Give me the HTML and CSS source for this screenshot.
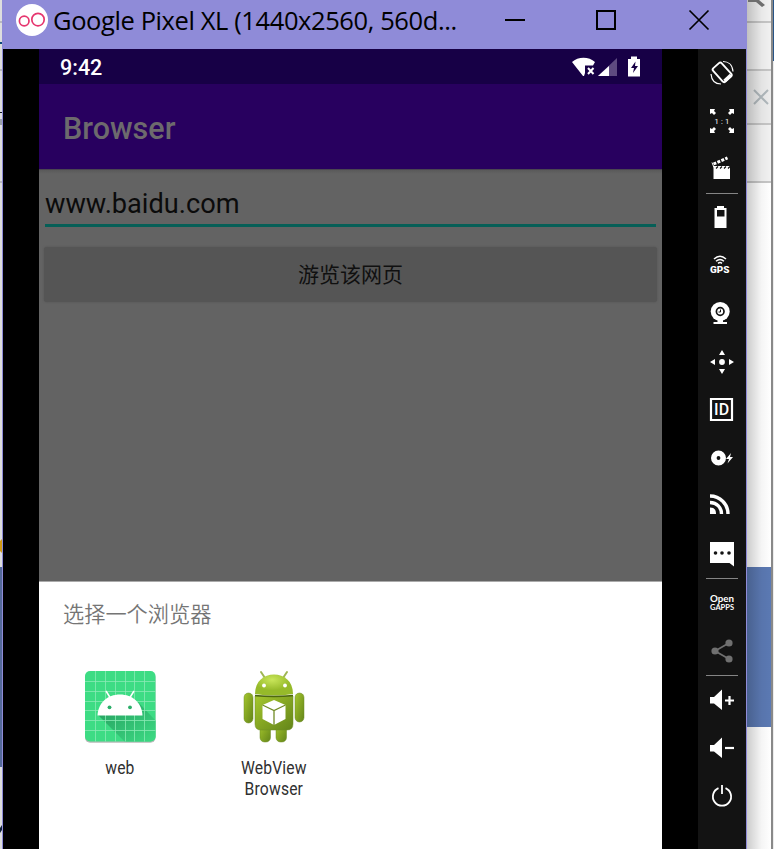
FILE: index.html
```html
<!DOCTYPE html>
<html lang="zh-CN">
<head>
<meta charset="utf-8">
<title>Google Pixel XL</title>
<link rel="stylesheet" href="styles.css">
</head>
<body>
<div class="desktop">
  <div class="behind-left">
    <svg width="2" height="849">
      <path d="M0 21h2v2H0zM0 69h2v2H0zM0 181h2v2H0z" fill="#b8b8be"/>
      <path d="M0 42h2v2H0z" fill="#0b4a78"/><path d="M0 112h2v1H0z" fill="#0b1620"/>
      <path d="M0 119h2v6H0z" fill="#9aa0aa"/>
      <path d="M0 541l2-2v14l-2-2z" fill="#d29a12"/>
      <path d="M0 567h2v200H0z" fill="#54699a"/>
      <path d="M0 828l2-3v5l-2 3z" fill="#10203a"/>
    </svg>
  </div>
  <main class="window">
    <header class="titlebar">
      <svg class="logo" width="32" height="32" viewBox="0 0 32 32"><circle cx="16" cy="16" r="16" fill="#fff"/><g fill="none" stroke="#e6366f" stroke-width="1.700"><circle cx="8.200" cy="17" r="4.800"/><circle cx="22" cy="15.600" r="6.200"/></g></svg>
      <h1>Google Pixel XL (1440x2560, 560d...</h1>
      <svg class="controls" width="206" height="24" viewBox="0 0 206 24" fill="none" stroke="#000" stroke-width="2"><path d="M0 12h20"/><path d="M92 3h18v18H92z"/><path d="M184.500 2.500l19 19M203.500 2.500l-19 19" stroke-width="1.700"/></svg>
    </header>
    <div class="emulator">
      <section class="screen">
        <div class="status"><span>9:42</span>
          <svg width="70" height="24" viewBox="0 0 70 24"><path d="M0 6C6 .2 17 .2 23 6l-2 3.500h-8V17l-1 3h-1z" fill="#fff"/><path d="M16 12l5.500 6M21.500 12L16 18" stroke="#fff" stroke-width="2"/><path d="M45 2v18H26z" fill="#5e4b80"/><path d="M37 10v10H26z" fill="#fff"/><path d="M59 .5h6V3h3v17.500H56V3h3z" fill="#fff"/><path d="M63.500 5.500L59 12h3l-1 5 5-7h-3z" fill="#170046"/></svg>
        </div>
        <div class="appbar">Browser</div>
        <div class="content">
          <div class="field">www.baidu.com</div>
          <div class="button">游览该网页</div>
        </div>
        <div class="sheet">
          <h2>选择一个浏览器</h2>
          <div class="apps">
            <div class="app">
              <svg width="72" height="74" viewBox="0 0 72 74"><defs><clipPath id="tile"><rect x="1" y="1" width="70.500" height="70.500" rx="5"/></clipPath><linearGradient id="shade" x1="0" y1="0" x2="1" y2="1"><stop offset="0" stop-color="#249b5d"/><stop offset="1" stop-color="#3ddc84"/></linearGradient></defs>
                <rect x="1" y="2.200" width="70.500" height="70.500" rx="5" fill="#b9b9b9"/><rect x="1" y="1" width="70.500" height="70.500" rx="5" fill="#3ddc84"/>
                <g clip-path="url(#tile)"><path d="M14 45L41 72H72V51L54 32z" fill="url(#shade)"/><path d="M11.500 0v72M21.500 0v72M31.500 0v72M41.500 0v72M50.500 0v72M60.500 0v72M0 11.500h72M0 21.500h72M0 31.500h72M0 40.500h72M0 50.500h72M0 60.500h72" stroke="#8aeab5" stroke-width=".8"/></g>
                <path d="M13.500 45.500C14 33 23.500 24.500 36 24.500S58 33 58.500 45.500z" fill="#fff"/><path d="M22 21l5 8M50 21l-5 8" stroke="#fff" stroke-width="1.500"/><circle cx="25.500" cy="37.300" r="1.900" fill="#2bae69"/><circle cx="46" cy="37.300" r="1.900" fill="#2bae69"/></svg>
              <span>web</span>
            </div>
            <div class="app">
              <svg width="72" height="74" viewBox="0 0 72 74"><defs><linearGradient id="body" x1="0" y1="0" x2="1" y2="1"><stop offset="0" stop-color="#a5c72e"/><stop offset=".5" stop-color="#84a522"/><stop offset="1" stop-color="#63851a"/></linearGradient><radialGradient id="head" cx=".45" cy=".25"><stop offset="0" stop-color="#c9e65a"/><stop offset="1" stop-color="#96ba2a"/></radialGradient></defs>
                <path d="M23 2l6 9M49 2l-6 9" stroke="#9fb653" stroke-width="2" stroke-linecap="round"/><g fill="url(#body)" stroke="#6f8c26" stroke-width=".5"><rect x="22" y="53" width="10.500" height="19" rx="4.500"/><rect x="38" y="53" width="10.500" height="19" rx="4.500"/><rect x="6" y="23" width="9" height="30" rx="4.500"/><rect x="57" y="23" width="9" height="29" rx="4.500"/><path d="M17 26h38v28q0 6-6 6H23q-6 0-6-6z"/></g><path d="M17 24C17 11 26 4.500 36 4.500S55 11 55 24q-19 3-38 0z" fill="url(#head)"/><path d="M17 25.500q19 2 38 0" fill="none" stroke="#4d6810" stroke-width="1.500"/><circle cx="26" cy="15.500" r="1.900" fill="#fff"/><circle cx="47" cy="15.500" r="1.900" fill="#fff"/><path d="M36 30l11.500 5v14L36 55l-11.500-6V35z" fill="#fff"/><path d="M24.500 35L36 40.500 47.500 35M36 40.500V55" stroke="#718b25" stroke-width="1.300" fill="none"/></svg>
              <span>WebView<br>Browser</span>
            </div>
          </div>
        </div>
      </section>
      <nav class="tools">
        <svg viewBox="0 0 48 48"><g fill="none" stroke="#fff"><rect x="18.500" y="14.500" width="11.500" height="18" rx="2" transform="rotate(-42 24 23.500)" stroke-width="1.900"/><path d="M26.500 32l6.500-6" stroke-width="3.500"/><path d="M25 12.500c5 0 9.500 3 10 10M13 25c.5 6 4 10 10 10" stroke-width="1.200"/></g></svg>
        <svg viewBox="0 0 48 48"><g fill="#fff"><path d="M12 12h5l-1 2 2 2-2 2-2-2-2 1zM36 12h-5l1 2-2 2 2 2 2-2 2 1zM12 36v-5l2 1 2-2 2 2-2 2 1 2zM36 36v-5l-2 1-2-2-2 2 2 2-1 2z"/><text x="24" y="26.600" font-size="7.500" text-anchor="middle" letter-spacing=".2">1 : 1</text></g></svg>
        <svg viewBox="0 0 48 48"><path d="M15.500 21h16.500v13H15.500z" fill="#fff"/><path d="M18 23.500l2-2M22 23.500l2-2M26 23.500l2-2M30 23.500l2-2" stroke="#131313" stroke-width="1.200"/><path d="M15.500 19L29.500 12.800" stroke="#fff" stroke-width="3" stroke-dasharray="3 1.300"/><path d="M14 17.500l2 5" stroke="#fff"/></svg>
        <hr>
        <svg viewBox="0 0 48 48"><path fill="#fff" fill-rule="evenodd" d="M19 12h7v2h2.500v20h-12V14H19zM19 16v6.500h7.500V16z"/></svg>
        <svg viewBox="0 0 48 48"><g fill="none" stroke="#fff" stroke-width="1.500"><path d="M16 17q6-5.500 12 0M18 19.200q4-3.500 8 0M20 21.300q2-1.500 4 0"/></g><text class="heavy" x="12" y="31" font-size="9" fill="#fff" textLength="19.500" lengthAdjust="spacingAndGlyphs">GPS</text></svg>
        <svg viewBox="0 0 48 48"><circle cx="22.200" cy="21.500" r="9.500" fill="#fff"/><circle cx="22.200" cy="21.500" r="3.800" fill="none" stroke="#131313" stroke-width="1.700"/><path d="M20.500 22h2v-2.500" fill="none" stroke="#131313"/><path d="M19.500 30h5.500v2h4v2H15.500v-2h4z" fill="#fff"/></svg>
        <svg viewBox="0 0 48 48"><path fill="#fff" d="M24 12l3 5h-6zM24 36l-3-5h6zM12 24l5-3v6zM36 24l-5-3v6z"/><circle cx="24" cy="24" r="2.900" fill="#fff"/></svg>
        <svg viewBox="0 0 48 48"><path d="M13 13h21v21H13z" fill="none" stroke="#fff" stroke-width="2.200"/><text class="id" x="23.600" y="29.200" font-size="16" text-anchor="middle" fill="#fff">ID</text></svg>
        <svg viewBox="0 0 48 48"><circle cx="20.500" cy="24" r="4.700" fill="none" stroke="#fff" stroke-width="5.600"/><path fill="#fff" d="M33 19l-5 6h3l-1.500 4.500 5.500-6.500h-3z"/></svg>
        <svg viewBox="0 0 48 48"><g fill="none" stroke="#fff" stroke-width="3.400"><path d="M12 14c10 0 18 8 18 18M12 20.500c7 0 11.500 5 11.500 11.500"/></g><path d="M12 25.500c4 0 6 2 6 6.500h-6z" fill="#fff"/></svg>
        <svg viewBox="0 0 48 48"><path fill="#fff" d="M12 12h24v24.500L31.500 33H12z"/><g fill="#131313"><circle cx="17.500" cy="23" r="1.800"/><circle cx="24" cy="23" r="1.800"/><circle cx="31" cy="23" r="1.800"/></g></svg>
        <hr>
        <svg viewBox="0 0 48 48"><g class="gapps" fill="#fff"><text x="12" y="23" font-size="9.500" textLength="24" lengthAdjust="spacingAndGlyphs">Open</text><text x="12" y="31" font-size="7.500" textLength="24" lengthAdjust="spacingAndGlyphs">GAPPS</text></g></svg>
        <svg viewBox="0 0 48 48"><g fill="#707070"><path d="M31 16L17 24l14 8" fill="none" stroke="#707070" stroke-width="1.700"/><circle cx="31" cy="16" r="3.600"/><circle cx="17" cy="24" r="3.600"/><circle cx="31" cy="32" r="3.600"/></g></svg>
        <hr>
        <svg viewBox="0 0 48 48"><path fill="#fff" d="M12 21h4l8-7.500v20.500l-8-6.500h-4z"/><path d="M27 24.500h9M31.500 20v9" stroke="#fff" stroke-width="2.200"/></svg>
        <svg viewBox="0 0 48 48"><path fill="#fff" d="M12 21h4l8-7.500v20.500l-8-6.500h-4z"/><path d="M27 24h9" stroke="#fff" stroke-width="2.200"/></svg>
        <svg viewBox="0 0 48 48"><g fill="none" stroke="#fff" stroke-width="1.800"><path d="M20.500 16.200a9.100 9.100 0 1 0 7 0M24 13v9"/></g></svg>
      </nav>
    </div>
  </main>
  <aside class="behind-right">
    <div class="pane"><i class="r1"></i><i class="r2"></i><i class="r3"><svg width="18" height="18" viewBox="0 0 18 18"><path d="M2 2l14 14M16 2L2 16" stroke="#b0b8bc" stroke-width="2"/></svg></i><i class="r4"></i><i class="r5"></i><i class="r6"></i><i class="r7"></i></div>
    <div class="edge"></div>
    <svg class="corner" width="24" height="8" viewBox="0 0 24 8"><path d="M1 0h11l6 5-3 2-6-5H1z" fill="#6e6e6e"/></svg>
  </aside>
</div>
</body>
</html>
```
FILE: styles.css
```css
* { box-sizing: border-box; }
body { margin: 0; overflow: hidden; background: #fff; font-family: Roboto, "Noto Sans CJK SC", sans-serif; }
svg { display: block; flex: none; }
h1, h2 { margin: 0; font-weight: 400; }
.desktop { display: flex; width: 774px; height: 849px; }
.behind-left { width: 2px; background: #dedede; }
.window { width: 745px; display: flex; flex-direction: column; background: #8f8bd8; }
.titlebar { height: 49px; display: flex; align-items: center; padding: 0 36px 9px 14px; }
.titlebar h1 { margin-left: 5px; width: 410px; font: 25.5px/38px "Open Sans", "Noto Sans", sans-serif; letter-spacing: -.4px; white-space: nowrap; color: #000; }
.controls { margin-left: auto; }
.emulator { flex: 1; display: flex; margin: 0 1px; background: #000; padding-left: 36px; justify-content: space-between; }
.screen { width: 623px; display: flex; flex-direction: column; background: #636363; }
.status { height: 35px; background: #170046; display: flex; justify-content: space-between; align-items: center; padding: 2px 20px 0 21px; color: #fff; font-size: 21.5px; font-weight: 500; }
.appbar { height: 86px; background: #28005f; color: #6d6a6d; font-size: 30.5px; font-weight: 500; line-height: 89px; padding-left: 24px; border-bottom: 1px solid #4a4551; }
.content { height: 411px; padding: 14px 5px 0; background: linear-gradient(#595959, #636363 4px); }
.field { height: 43px; margin: 0 1px; border-bottom: 3px solid #065f57; font-size: 27.2px; line-height: 41px; color: #0b0b0b; }
.button { height: 55px; margin-top: 20px; border-radius: 3px; background: #555; box-shadow: 0 0 2px #505050; text-align: center; font-size: 21px; line-height: 56px; color: #101010; }
.sheet { flex: 1; background: #fff; border-top: 1px solid #aaa; padding: 17px 4px 0; }
.sheet h2 { padding-left: 20px; font-size: 21.2px; line-height: 32px; font-weight: 350; color: #757575; }
.apps { display: flex; margin-top: 39px; }
.app { width: 154px; display: flex; flex-direction: column; align-items: center; }
.app span { margin-top: 13px; font-size: 18px; line-height: 21px; text-align: center; color: #303030; transform: scaleX(.87); letter-spacing: .2px; }
.tools { width: 48px; background: #131313; font-family: Roboto, sans-serif; }
.tools svg { width: 48px; height: 48px; }
.tools hr { border: 0; margin: 0 8px; height: 1px; background: #858585; }
.heavy { font-weight: 900; }
.id { font-weight: 500; }
.gapps { font-family: Lato, sans-serif; font-weight: 700; }
.behind-right { width: 27px; display: flex; position: relative; }
.pane { width: 24px; background: #fff; display: flex; flex-direction: column; position: relative; }
.pane::after { content: ""; position: absolute; inset: 0; background: linear-gradient(90deg, rgba(0,0,0,.2), rgba(0,0,0,.04) 60%, transparent); }
.pane i { display: block; background: #f1f1f1; border-bottom: 2px solid #c6c6c6; }
.r1 { height: 23px; }
.r2 { height: 48px; }
.pane .r3 { height: 54px; background: #ececec; padding: 17px 0 0 5px; }
.r4 { height: 58px; }
.pane .r5 { height: 384px; background: #fff; border: 0; }
.pane .r6 { height: 160px; background: #5b79b3; border: 0; }
.pane .r7 { flex: 1; background: #fff; border: 0; }
.edge { width: 3px; border-left: 2px solid #898989; background: linear-gradient(#285588 61px, #ececec 61px); }
.corner { position: absolute; left: 0; top: 0; }
```
